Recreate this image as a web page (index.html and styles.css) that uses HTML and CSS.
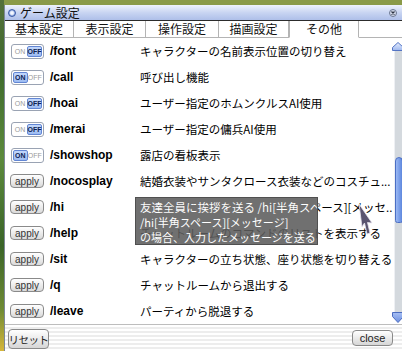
FILE: index.html
```html
<!DOCTYPE html>
<html lang="ja">
<head>
<meta charset="utf-8">
<title>ゲーム設定</title>
<link rel="stylesheet" href="styles.css">
</head>
<body>
<div class="window">
  <div class="titlebar">
    <span class="orb"></span>
    <span class="title">ゲーム設定</span>
    <svg class="xbtn" width="8" height="8" viewBox="0 0 8 8"><circle cx="4" cy="4" r="3.5" fill="#d5dcec" stroke="#6a7690"/><path d="M2.5 2.5 L5.5 5.5 M5.5 2.5 L2.5 5.5" stroke="#2a3040" stroke-width="1.2"/></svg>
  </div>
  <div class="tabs">
    <div class="tab t1">基本設定</div>
    <div class="tab t2">表示設定</div>
    <div class="tab t3">操作設定</div>
    <div class="tab t4">描画設定</div>
    <div class="tab t5 active">その他</div>
    <div class="tab-fill"></div>
  </div>
  <div class="main">
    <div class="list">
      <div class="row"><span class="toggle"><span class="seg">ON</span><span class="seg on">OFF</span></span><span class="cmd">/font</span><span class="desc">キャラクターの名前表示位置の切り替え</span></div>
      <div class="row"><span class="toggle"><span class="seg on">ON</span><span class="seg">OFF</span></span><span class="cmd">/call</span><span class="desc">呼び出し機能</span></div>
      <div class="row"><span class="toggle"><span class="seg">ON</span><span class="seg on">OFF</span></span><span class="cmd">/hoai</span><span class="desc">ユーザー指定のホムンクルスAI使用</span></div>
      <div class="row"><span class="toggle"><span class="seg">ON</span><span class="seg on">OFF</span></span><span class="cmd">/merai</span><span class="desc">ユーザー指定の傭兵AI使用</span></div>
      <div class="row"><span class="toggle"><span class="seg on">ON</span><span class="seg">OFF</span></span><span class="cmd">/showshop</span><span class="desc">露店の看板表示</span></div>
      <div class="row"><span class="apply">apply</span><span class="cmd">/nocosplay</span><span class="desc">結婚衣装やサンタクロース衣装などのコスチュ...</span></div>
      <div class="row"><span class="apply">apply</span><span class="cmd">/hi</span><span class="desc">友達全員に挨拶を送る /hi[半角スペース][メッセ..</span></div>
      <div class="row"><span class="apply">apply</span><span class="cmd">/help</span><span class="desc">チャットルームのコマンドのリストを表示する</span></div>
      <div class="row"><span class="apply">apply</span><span class="cmd">/sit</span><span class="desc">キャラクターの立ち状態、座り状態を切り替える</span></div>
      <div class="row"><span class="apply">apply</span><span class="cmd">/q</span><span class="desc">チャットルームから退出する</span></div>
      <div class="row"><span class="apply">apply</span><span class="cmd">/leave</span><span class="desc">パーティから脱退する</span></div>
    </div>
    <div class="sb">
      <svg class="sb-up" width="12" height="9" viewBox="0 0 12 9"><defs><linearGradient id="gu" x1="0" y1="0" x2="0" y2="1"><stop offset="0" stop-color="#e6eeff"/><stop offset="1" stop-color="#9fb8ee"/></linearGradient></defs><polygon points="6,0.5 11.5,5.5 11.5,8.5 0.5,8.5 0.5,5.5" fill="url(#gu)" stroke="#5474c4"/></svg>
      <div class="sb-track"><div class="sb-thumb"></div></div>
      <svg class="sb-down" width="12" height="11" viewBox="0 0 12 11"><defs><linearGradient id="gd" x1="0" y1="0" x2="0" y2="1"><stop offset="0" stop-color="#a8c0f4"/><stop offset="1" stop-color="#6d8fe0"/></linearGradient></defs><polygon points="0.5,0.5 11.5,0.5 11.5,4.5 6,10.5 0.5,4.5" fill="url(#gd)" stroke="#4c6cc0"/></svg>
    </div>
  </div>
  <div class="footer">
    <button class="btn reset">リセット</button>
    <button class="btn close">close</button>
  </div>
</div>
<div class="tooltip">
  <div>友達全員に挨拶を送る /hi[半角スペース][メッセージ]</div>
  <div class="tip-small">/hi[半角スペース][メッセージ]</div>
  <div class="tip-small">の場合、入力したメッセージを送る</div>
</div>
<svg class="cursor" width="20" height="36" viewBox="0 0 20 36"><polygon points="5,1 8,24 10.5,20 13,31 16,30 13.5,19.5 18,20" fill="#5a5470" stroke="#e8e4f0" stroke-width="0.8" stroke-linejoin="round"/></svg>
</body>
</html>
```

FILE: styles.css
```css
* {
  box-sizing: border-box;
  margin: 0;
  padding: 0;
}

html, body {
  width: 402px;
  height: 351px;
  overflow: hidden;
}

body {
  position: relative;
  font-family: "Noto Sans CJK JP", sans-serif;
  background:
    linear-gradient(90deg, transparent 0, transparent 4px, #8a9a48 4px),
    linear-gradient(180deg, #54703a 0, #3e6a2c 20%, #5c8a3c 45%, #3a6428 70%, #6e8a34 88%, #d6b63a 100%);
}

.window {
  margin: 5px 0 0 4px;
  width: 398px;
  height: 346px;
  background: #fff;
  border-left: 1px solid #7d8796;
  display: flex;
  flex-direction: column;
}

/* Title bar */
.titlebar {
  height: 15px;
  display: flex;
  align-items: center;
  padding-left: 3px;
  background: linear-gradient(#eef2fc, #c9d5f2 50%, #aebfe9);
}

.orb {
  width: 8px;
  height: 8px;
  border-radius: 50%;
  border: 1px solid #3b5aa6;
  background: radial-gradient(circle, #f4f7ff 30%, #7d9ad8 75%);
}

.title {
  margin-left: 4px;
  font-size: 12px;
  line-height: 15px;
  color: #111;
}

.xbtn {
  margin-left: auto;
  margin-right: 5px;
}

/* Tabs */
.tabs {
  height: 18px;
  display: flex;
  border-top: 1px solid #2c2c2c;
}

.tab {
  height: 17px;
  font-size: 12px;
  line-height: 16px;
  color: #111;
  text-align: center;
  border-right: 1px solid #b4b4b4;
  border-bottom: 1px solid #b4b4b4;
  background: #fff;
}

.t1 { width: 69px; }
.t2 { width: 72px; }
.t3 { width: 73px; }
.t4 { width: 70px; }
.t5 { width: 70px; }

.tab.active {
  border-bottom-color: #fff;
  border-left: 1px solid #b4b4b4;
}

.tab-fill {
  flex: 1;
  height: 17px;
  border-bottom: 1px solid #b4b4b4;
}

/* Main list */
.main {
  height: 286px;
  display: flex;
}

.list {
  flex: 1;
}

.row {
  height: 26px;
  display: flex;
  align-items: center;
  padding-left: 6px;
}

.toggle {
  width: 33px;
  height: 15px;
  margin-right: 6px;
  display: flex;
  justify-content: space-between;
  padding: 1px;
  border: 1px solid #9aa3b3;
  border-radius: 3px;
  background: #fff;
}

.seg {
  width: 15px;
  display: flex;
  align-items: center;
  justify-content: center;
  font: 7px "Liberation Sans", sans-serif;
  color: #9a9a9a;
  border-radius: 2px;
  white-space: nowrap;
}

.seg.on {
  background: linear-gradient(#c2d7fb, #9cbbf1);
  border: 1px solid #6286d4;
  color: #0e1f52;
  font-weight: bold;
}

.apply {
  width: 34px;
  height: 14px;
  margin-left: -1px;
  margin-right: 6px;
  display: flex;
  align-items: center;
  justify-content: center;
  border: 1px solid #8a8a8a;
  border-radius: 4px;
  background: linear-gradient(#ffffff, #dadada);
  font: 10px "Liberation Sans", sans-serif;
  color: #333;
}

.cmd {
  width: 90px;
  font: bold 12px "Liberation Sans", sans-serif;
  color: #000;
}

.desc {
  font-size: 11.5px;
  white-space: nowrap;
  color: #000;
}

/* Scrollbar */
.sb {
  width: 12px;
  display: flex;
  flex-direction: column;
  padding: 4px 0 1px;
}

.sb-up, .sb-down {
  display: block;
}

.sb-track {
  flex: 1;
  margin: 0 0 0 2px;
  background: #d4d9de;
  border-left: 1px solid #eef0f4;
  border-right: 1px solid #8b9199;
}

.sb-thumb {
  margin-top: 106px;
  height: 66px;
  border-radius: 5px 5px 3px 3px;
  background: linear-gradient(90deg, #9ab8f4, #5f88de);
  border: 1px solid #4a6ec4;
}

/* Footer */
.footer {
  height: 27px;
  display: flex;
  justify-content: space-between;
  align-items: flex-start;
  padding: 4px 9px 0 3px;
  border-top: 1px solid #bdbdbd;
  background: repeating-linear-gradient(180deg, #ffffff 0, #ffffff 2px, #ededed 2px, #ededed 4px);
}

.btn {
  width: 41px;
  padding: 0;
  border: 1px solid #8a8a8a;
  border-radius: 4px;
  background: linear-gradient(#ffffff, #d6d6d6);
  color: #222;
  display: flex;
  align-items: center;
  justify-content: center;
  white-space: nowrap;
  overflow: hidden;
}

.reset {
  height: 20px;
  font: 10.5px "Noto Sans CJK JP", sans-serif;
  letter-spacing: -0.5px;
}

.close {
  height: 16px;
  margin-top: 1px;
  font: 11px "Liberation Sans Narrow", "Liberation Sans", sans-serif;
}

/* Overlays */
.tooltip {
  position: absolute;
  left: 135px;
  top: 197px;
  width: 183px;
  height: 48px;
  padding: 2px 0 0 4px;
  overflow: hidden;
  white-space: nowrap;
  background: rgba(92, 92, 92, 0.88);
  border: 1px solid #505050;
  color: #fff;
  font-size: 11.5px;
  line-height: 15px;
}

.tip-small {
  font-size: 11px;
}

.cursor {
  position: absolute;
  left: 354px;
  top: 203px;
}
```
